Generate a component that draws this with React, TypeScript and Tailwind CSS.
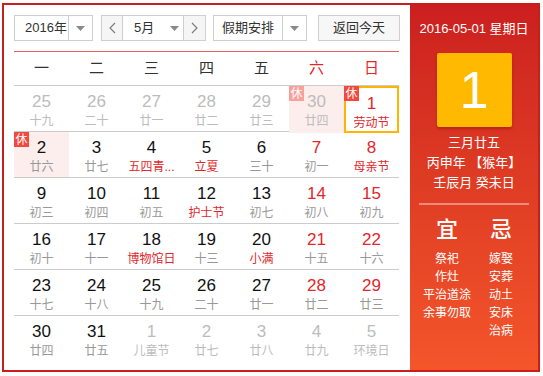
import React from "react"

type Day = {
  num: number
  lunar: string
  muted?: boolean
  weekend?: boolean
  festival?: boolean
  rest?: boolean
  today?: boolean
}

const weeks: Day[][] = [
  [
    { num: 25, lunar: "十九", muted: true },
    { num: 26, lunar: "二十", muted: true },
    { num: 27, lunar: "廿一", muted: true },
    { num: 28, lunar: "廿二", muted: true },
    { num: 29, lunar: "廿三", muted: true },
    { num: 30, lunar: "廿四", muted: true, rest: true },
    { num: 1, lunar: "劳动节", weekend: true, festival: true, rest: true, today: true },
  ],
  [
    { num: 2, lunar: "廿六", rest: true },
    { num: 3, lunar: "廿七" },
    { num: 4, lunar: "五四青...", festival: true },
    { num: 5, lunar: "立夏", festival: true },
    { num: 6, lunar: "三十" },
    { num: 7, lunar: "初一", weekend: true },
    { num: 8, lunar: "母亲节", weekend: true, festival: true },
  ],
  [
    { num: 9, lunar: "初三" },
    { num: 10, lunar: "初四" },
    { num: 11, lunar: "初五" },
    { num: 12, lunar: "护士节", festival: true },
    { num: 13, lunar: "初七" },
    { num: 14, lunar: "初八", weekend: true },
    { num: 15, lunar: "初九", weekend: true },
  ],
  [
    { num: 16, lunar: "初十" },
    { num: 17, lunar: "十一" },
    { num: 18, lunar: "博物馆日", festival: true },
    { num: 19, lunar: "十三" },
    { num: 20, lunar: "小满", festival: true },
    { num: 21, lunar: "十五", weekend: true },
    { num: 22, lunar: "十六", weekend: true },
  ],
  [
    { num: 23, lunar: "十七" },
    { num: 24, lunar: "十八" },
    { num: 25, lunar: "十九" },
    { num: 26, lunar: "二十" },
    { num: 27, lunar: "廿一" },
    { num: 28, lunar: "廿二", weekend: true },
    { num: 29, lunar: "廿三", weekend: true },
  ],
  [
    { num: 30, lunar: "廿四" },
    { num: 31, lunar: "廿五" },
    { num: 1, lunar: "儿童节", muted: true },
    { num: 2, lunar: "廿七", muted: true },
    { num: 3, lunar: "廿八", muted: true },
    { num: 4, lunar: "廿九", muted: true },
    { num: 5, lunar: "环境日", muted: true },
  ],
]

const weekdays = ["一", "二", "三", "四", "五", "六", "日"]
const yi = ["祭祀", "作灶", "平治道涂", "余事勿取"]
const ji = ["嫁娶", "安葬", "动土", "安床", "治病"]

const Caret = () => (
  <svg width="9" height="5" viewBox="0 0 9 5">
    <path d="M0 0 L9 0 L4.5 5 Z" fill="#8a8a8a" />
  </svg>
)

const Chevron = ({ dir }: { dir: "left" | "right" }) => (
  <svg width="7" height="12" viewBox="0 0 7 12">
    <polyline
      points={dir === "left" ? "6,1 1,6 6,11" : "1,1 6,6 1,11"}
      fill="none"
      stroke="#777"
      strokeWidth="1.1"
    />
  </svg>
)

const DayCell = ({ day }: { day: Day }) => {
  let numColor = "text-[#111]"
  if (day.muted) numColor = "text-[#bcbcbc]"
  else if (day.weekend) numColor = "text-[#e3262b]"

  let lunarColor = "text-[#999]"
  if (day.muted) lunarColor = "text-[#bcbcbc]"
  else if (day.festival) lunarColor = "text-[#e3262b]"

  return (
    <div
      className={
        "relative flex flex-col items-center pt-[6px] " +
        (day.rest && !day.today ? "bg-[#fdeeee] " : "") +
        (day.today ? "border-2 border-[#ffb400] pt-[4px]" : "")
      }
    >
      {day.rest && (
        <div
          className={
            "absolute flex h-[15px] w-[15px] items-center justify-center text-[12px] leading-none text-white " +
            (day.today ? "-left-[2px] -top-[2px] " : "left-0 top-0 ") +
            (day.muted ? "bg-[#f8a09c]" : "bg-[#f4473e]")
          }
        >
          休
        </div>
      )}
      <span className={"text-[17px] leading-[20px] " + numColor}>{day.num}</span>
      <span className={"mt-[1px] text-[12px] leading-[16px] " + lunarColor}>{day.lunar}</span>
    </div>
  )
}

const App = () => {
  return (
    <div
      className="pl-[2px] pt-[3px]"
      style={{ fontFamily: '"Liberation Sans", Arial, "Noto Sans CJK SC", sans-serif' }}
    >
      <div className="flex h-[369px] w-[538px] border-2 border-[#c81e1e] bg-white">
        {/* calendar side */}
        <div className="w-[406px] pl-[10px] pt-[10px]">
          <div className="flex h-[26px] text-[13px] text-[#333]">
            <div className="flex w-[79px] border border-[#cfcfcf]">
              <div className="flex flex-1 items-center pl-[10px]">2016年</div>
              <div className="flex w-[24px] items-center justify-center border-l border-[#cfcfcf]">
                <Caret />
              </div>
            </div>
            <div className="ml-[8px] flex w-[105px] border border-[#cfcfcf]">
              <div className="flex w-[21px] items-center justify-center border-r border-[#cfcfcf] bg-[#f5f5f5]">
                <Chevron dir="left" />
              </div>
              <div className="flex flex-1 items-center pl-[11px]">
                <span>5月</span>
                <span className="ml-[16px] flex">
                  <Caret />
                </span>
              </div>
              <div className="flex w-[22px] items-center justify-center border-l border-[#cfcfcf] bg-[#f5f5f5]">
                <Chevron dir="right" />
              </div>
            </div>
            <div className="ml-[7px] flex w-[94px] border border-[#cfcfcf]">
              <div className="flex flex-1 items-center justify-center">假期安排</div>
              <div className="flex w-[24px] items-center justify-center border-l border-[#cfcfcf]">
                <Caret />
              </div>
            </div>
            <div className="ml-[11px] flex w-[82px] items-center justify-center border border-[#cfcfcf] bg-[#f7f7f7]">
              返回今天
            </div>
          </div>

          <div className="mt-[10px] w-[385px] border-t border-[#e8605a]">
            <div className="grid h-[34px] grid-cols-7 border-b border-[#cccccc] text-[15px]">
              {weekdays.map((w, i) => (
                <div
                  key={w}
                  className={
                    "flex items-center justify-center " +
                    (i >= 5 ? "text-[#e3262b]" : "text-[#333]")
                  }
                >
                  {w}
                </div>
              ))}
            </div>
            {weeks.map((week, wi) => (
              <div
                key={wi}
                className={
                  "grid h-[46px] grid-cols-7 " +
                  (wi < weeks.length - 1 ? "border-b border-[#cccccc]" : "")
                }
              >
                {week.map((day, di) => (
                  <DayCell key={di} day={day} />
                ))}
              </div>
            ))}
          </div>
        </div>

        {/* detail side */}
        <div className="flex w-[128px] flex-col items-center bg-linear-to-b from-[#cb1f1f] to-[#f4552a] pt-[14px] text-white">
          <div className="text-[13px] leading-[20px]">2016-05-01 星期日</div>
          <div className="mt-[14px] flex h-[74px] w-[75px] items-center justify-center rounded-[2px] bg-[#ffb900] text-[52px] leading-none shadow-[0_2px_3px_rgba(120,0,0,0.35)]">
            1
          </div>
          <div className="mt-[6px] flex flex-col items-center text-[13px] leading-[20px]">
            <span>三月廿五</span>
            <span>丙申年 【猴年】</span>
            <span>壬辰月 癸未日</span>
          </div>
          <div className="mt-[10px] h-[2px] w-[110px] bg-[#f08a7a]" />
          <div className="mt-[12px] grid w-[108px] grid-cols-2">
            <div className="flex flex-col items-center">
              <span className="text-[22px] font-medium leading-[26px]">宜</span>
              <div className="mt-[7px] flex flex-col items-center text-[12px] leading-[18px]">
                {yi.map((t) => (
                  <span key={t}>{t}</span>
                ))}
              </div>
            </div>
            <div className="flex flex-col items-center">
              <span className="text-[22px] font-medium leading-[26px]">忌</span>
              <div className="mt-[7px] flex flex-col items-center text-[12px] leading-[18px]">
                {ji.map((t) => (
                  <span key={t}>{t}</span>
                ))}
              </div>
            </div>
          </div>
        </div>
      </div>
    </div>
  )
}

export default App
